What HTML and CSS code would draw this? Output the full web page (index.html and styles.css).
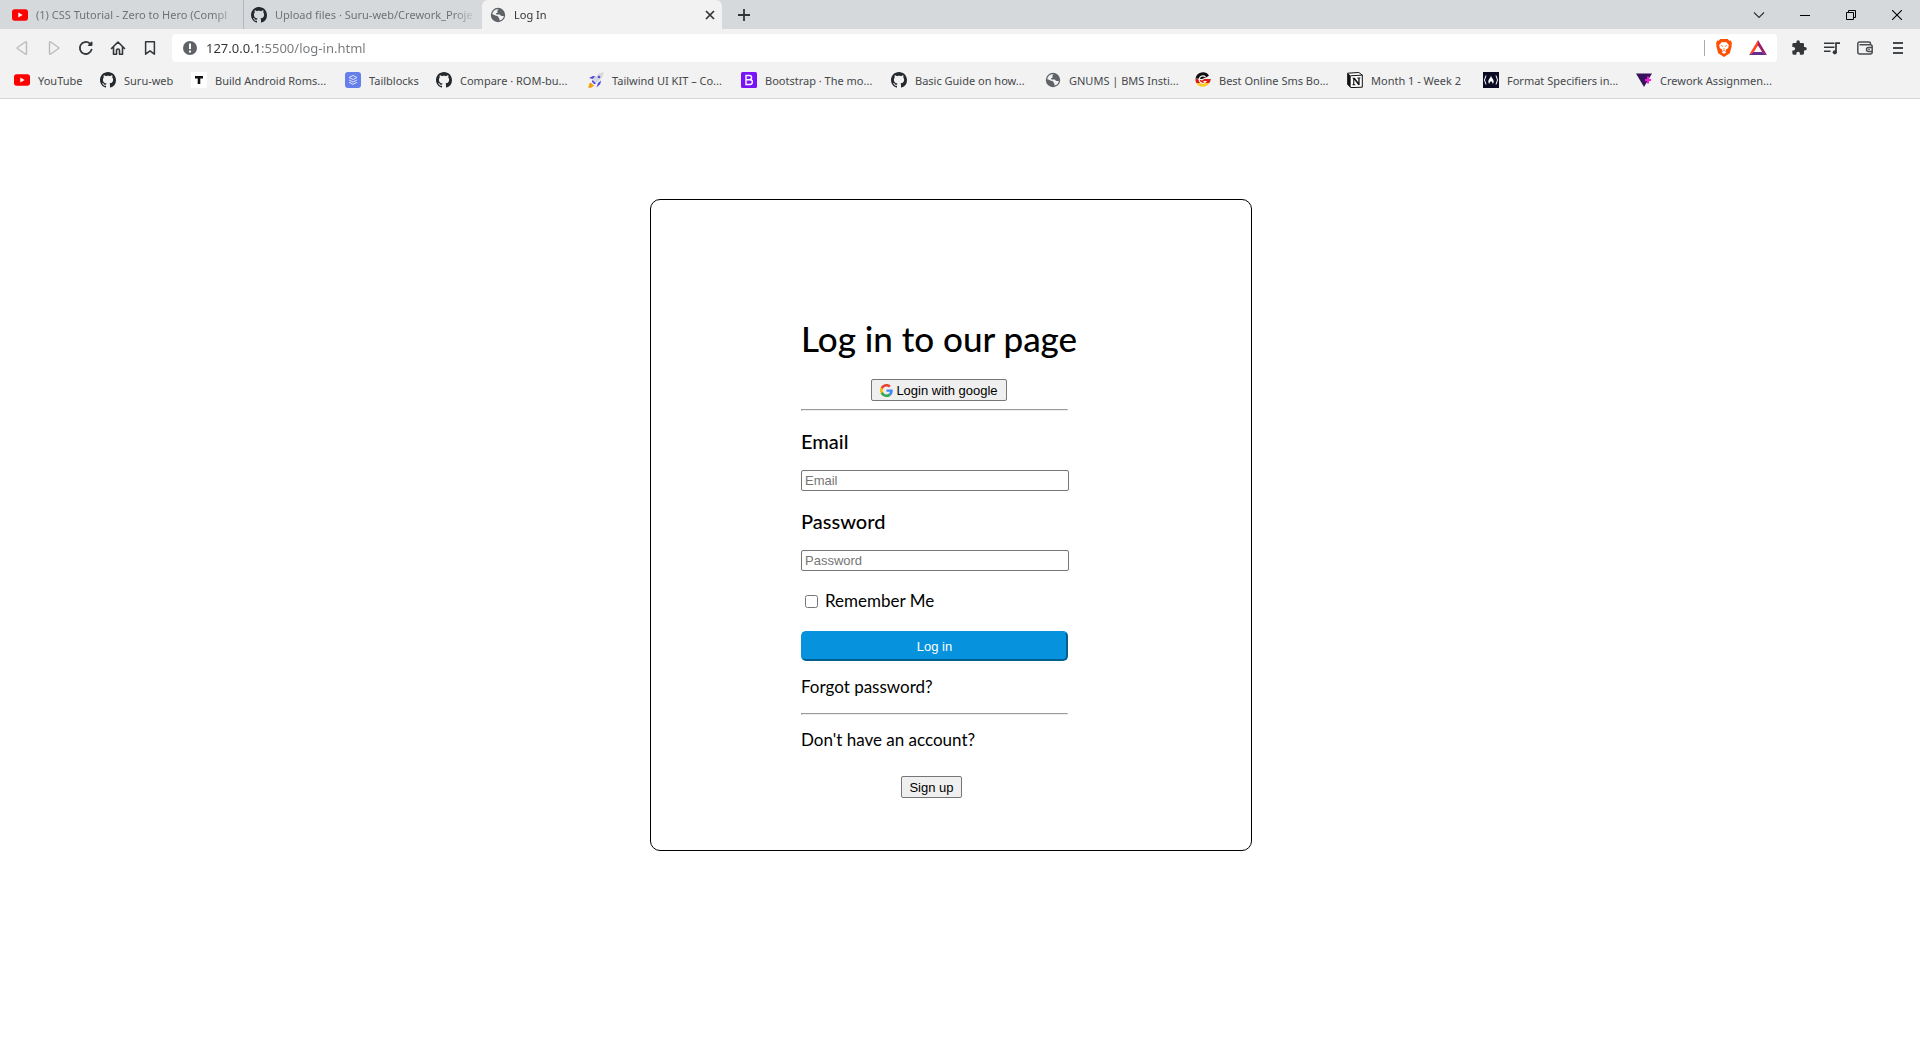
FILE: index.html
```html
<!DOCTYPE html>
<html lang="en">
<head>
<meta charset="utf-8">
<title>Log In</title>
<link rel="stylesheet" href="styles.css">
</head>
<body>
<svg class="defs" aria-hidden="true">
  <symbol id="youtube" viewBox="0 0 16 16"><rect y="2.3" width="16" height="11.4" rx="2.6" fill="#f00"/><path d="M6.3 5.6v4.8l4.3-2.4z" fill="#fff"/></symbol>
  <symbol id="github" viewBox="0 0 16 16"><path fill="#24292e" d="M8 0C3.58 0 0 3.58 0 8c0 3.54 2.29 6.53 5.47 7.59.4.07.55-.17.55-.38 0-.19-.01-.82-.01-1.49-2.01.37-2.53-.49-2.69-.94-.09-.23-.48-.94-.82-1.13-.28-.15-.68-.52-.01-.53.63-.01 1.08.58 1.23.82.72 1.21 1.87.87 2.33.66.07-.52.28-.87.51-1.07-1.78-.2-3.64-.89-3.64-3.95 0-.87.31-1.59.82-2.15-.08-.2-.36-1.02.08-2.12 0 0 .67-.21 2.2.82.64-.18 1.32-.27 2-.27s1.36.09 2 .27c1.53-1.04 2.2-.82 2.2-.82.44 1.1.16 1.92.08 2.12.51.56.82 1.27.82 2.15 0 3.07-1.87 3.75-3.65 3.95.29.25.54.73.54 1.48 0 1.07-.01 1.93-.01 2.2 0 .21.15.46.55.38A8.01 8.01 0 0 0 16 8c0-4.42-3.58-8-8-8z"/></symbol>
  <symbol id="globe" viewBox="0 0 16 16"><circle cx="8" cy="8" r="7.2" fill="#5f6368"/><path fill="#f2f2f2" d="M8.800 2.800c-1.400.2-1.700 1.200-1.300 2 .3.800-.3 1.100-1 1.300-.9.300-.5 1.300.3 1.300h2.500c1.300 0 1.200 1.500 2.300 1.500h2.300c-.3 2.300-2 4.100-4.400 4.600v-1.300c0-.9-.9-1-.9-1.800 0-1.200-1.300-1.300-2.300-1.600C4.900 8.400 3.900 7.500 2.300 7.300c.2-2.500 2-4.500 4.300-5 .7-.2 1.500-.1 2.200.5z"/></symbol>
</svg>

<header class="browser">
  <div class="tabs">
    <div class="tab">
      <svg class="icon"><use href="#youtube"/></svg>
      <span class="tab-title">(1) CSS Tutorial - Zero to Hero (Compl</span>
    </div>
    <div class="tab tab-second">
      <svg class="icon"><use href="#github"/></svg>
      <span class="tab-title">Upload files · Suru-web/Crework_Proje</span>
    </div>
    <div class="tab tab-active">
      <svg class="icon"><use href="#globe"/></svg>
      <span class="tab-title">Log In</span>
      <button class="plain tab-close" aria-label="Close tab"><svg width="10" height="10" viewBox="0 0 10 10"><path d="M1 1l8 8M9 1l-8 8" stroke="#333" stroke-width="1.7"/></svg></button>
    </div>
    <button class="plain new-tab" aria-label="New tab"><svg width="12" height="12" viewBox="0 0 12 12"><path d="M6 0v12M0 6h12" stroke="#333" stroke-width="1.8"/></svg></button>
    <div class="window-controls">
      <button class="plain" aria-label="Search tabs"><svg width="12" height="12" viewBox="0 0 12 12"><path d="M1 3.500l5 5 5-5" fill="none" stroke="#333" stroke-width="1.200"/></svg></button>
      <button class="plain" aria-label="Minimize"><svg width="10" height="10" viewBox="0 0 10 10"><path d="M0 5.500h10" stroke="#000"/></svg></button>
      <button class="plain" aria-label="Restore"><svg width="10" height="10" viewBox="0 0 10 10"><path d="M.5 2.500h7v7h-7zM2.500 2.500v-2h7v7h-2" fill="none" stroke="#000"/></svg></button>
      <button class="plain" aria-label="Close"><svg width="10" height="10" viewBox="0 0 10 10"><path d="M0 0l10 10M10 0L0 10" stroke="#000" stroke-width="1.100"/></svg></button>
    </div>
  </div>

  <div class="toolbar">
    <div class="nav">
      <button class="plain" aria-label="Back"><svg width="16" height="16" viewBox="0 0 16 16"><path d="M12.500 2.200v11.600a.5.500 0 0 1-.8.400L3.400 8.500a.6.600 0 0 1 0-1l8.300-5.700a.5.500 0 0 1 .8.400z" fill="none" stroke="#bbb" stroke-width="1.400"/></svg></button>
      <button class="plain" aria-label="Forward"><svg width="16" height="16" viewBox="0 0 16 16"><path d="M3.500 2.200v11.600a.5.500 0 0 0 .8.400l8.300-5.700a.6.600 0 0 0 0-1L4.300 1.800a.5.500 0 0 0-.8.400z" fill="none" stroke="#bbb" stroke-width="1.400"/></svg></button>
      <button class="plain" aria-label="Reload"><svg width="16" height="16" viewBox="0 0 16 16"><path d="M13.600 9.600A6 6 0 1 1 11.600 3.300" fill="none" stroke="#33373a" stroke-width="1.800" stroke-linecap="round"/><path d="M9.800 5.300a1 1 0 0 0 1 .8h2.700a1 1 0 0 0 1-1V2.400a1 1 0 0 0-1-1z" fill="#33373a"/></svg></button>
      <button class="plain" aria-label="Home"><svg width="16" height="16" viewBox="0 0 16 16"><path d="M1.500 8.500L8 2l6.500 6.500M3.500 7v7.200h3v-3.700a1.500 1.500 0 0 1 3 0v3.700h3V7" fill="none" stroke="#33373a" stroke-width="1.600" stroke-linejoin="round" stroke-linecap="round"/></svg></button>
      <button class="plain" aria-label="Bookmark"><svg width="16" height="16" viewBox="0 0 16 16"><path d="M3.600 1.800h8.800v12.400L8 10.800l-4.400 3.400z" fill="none" stroke="#33373a" stroke-width="1.500" stroke-linejoin="round"/></svg></button>
    </div>
    <div class="address">
      <svg width="16" height="16" viewBox="0 0 16 16"><circle cx="8" cy="8" r="7" fill="#5f6368"/><path d="M7 3.500h2v5.500H7zM7 10.500h2v2H7z" fill="#fff"/></svg>
      <input class="url" type="text" aria-label="Address" value="127.0.0.1:5500/log-in.html">
      <span class="divider"></span>
      <button class="plain" aria-label="Shields"><svg width="18" height="18" viewBox="0 0 18 18"><path d="M5.300 0h7.400l1.600 1.700 1.500-.1 1.200 2.800-.5 1.400.3 1-2 7.400L9 18l-5.800-3.800-2-7.400.3-1L1 4.400l1.200-2.800 1.500.1z" fill="#ff5000"/><path d="M9 3.300l2.200-.3 2.800 3.200-.8 1.800.2 1-2.500 1.400.2 1L9 13.200l-2.100-1.800.2-1L4.600 9l.2-1L4 6.200 6.800 3zM6.600 13.200L9 11.800l2.400 1.400L9 15z" fill="#fff"/><path d="M5.600 6l2.200.8-.3 1.100zM12.400 6l-2.200.8.300 1.100zM9 8.500l.7 1.900H8.300zM7.500 11l1.500 1 1.500-1" fill="#ff5000"/></svg></button>
      <button class="plain" aria-label="Rewards"><svg width="18" height="18" viewBox="0 0 18 18"><path d="M9 1v5.500L4.700 13.300 0 16z" fill="#ff4724"/><path d="M9 1l9 15-4.700-2.700L9 6.500z" fill="#9e1f63"/><path d="M0 16l4.700-2.900h8.600L18 16z" fill="#662d91"/></svg></button>
    </div>
    <div class="actions">
      <button class="plain" aria-label="Extensions"><svg width="16" height="16" viewBox="0 0 24 24"><path fill="#33373a" d="M21 10.500h-1.500V6.500a2 2 0 0 0-2-2h-4.200V3a2.600 2.600 0 0 0-5.200 0v1.500H4a2 2 0 0 0-2 2v4h1.500a2.700 2.700 0 0 1 0 5.400H2V20a2 2 0 0 0 2 2h4v-1.500a2.700 2.700 0 0 1 5.400 0V22h4.100a2 2 0 0 0 2-2v-4.200H21a2.650 2.650 0 0 0 0-5.300z"/></svg></button>
      <button class="plain" aria-label="Media control"><svg width="16" height="16" viewBox="0 0 16 16"><path d="M0 3.200h10.500M0 7.200h10.500M0 11.200h6.500" stroke="#33373a" stroke-width="1.600"/><path d="M12 13V3.200h4" fill="none" stroke="#33373a" stroke-width="1.700"/><circle cx="10.800" cy="12.300" r="2.100" fill="#33373a"/></svg></button>
      <button class="plain" aria-label="Wallet"><svg width="16" height="16" viewBox="0 0 16 16"><path d="M13.500 5V3.500a1.500 1.500 0 0 0-1.500-1.500H2.500a1.700 1.700 0 0 0-1.700 1.700V12a2 2 0 0 0 2 2h10.400a2 2 0 0 0 2-2V6.800a2 2 0 0 0-2-2H2.500M15 7.400h-3.500a2 2 0 0 0 0 4H15" fill="none" stroke="#4a4e51" stroke-width="1.500"/><circle cx="12" cy="9.400" r=".8" fill="#4a4e51"/></svg></button>
      <button class="plain" aria-label="Menu"><svg width="16" height="16" viewBox="0 0 16 16"><path d="M3 3h10M3 8h10M3 13h10" stroke="#45494c" stroke-width="1.800"/></svg></button>
    </div>
  </div>

  <nav class="bookmarks" aria-label="Bookmarks">
    <a href="#"><svg class="icon"><use href="#youtube"/></svg>YouTube</a>
    <a href="#"><svg class="icon"><use href="#github"/></svg>Suru-web</a>
    <a href="#"><svg class="icon" viewBox="0 0 16 16"><rect width="16" height="16" fill="#fff"/><path d="M4 4h8v2.500H9.300V12H6.700V6.500H4z" fill="#111"/></svg>Build Android Roms...</a>
    <a href="#"><svg class="icon" viewBox="0 0 16 16"><rect width="16" height="16" rx="3" fill="#667eea"/><path d="M8 3.500l4 2-4 2-4-2zM4 8l4 2 4-2M4 10.300l4 2 4-2" fill="none" stroke="#dfe4ff" stroke-width="1"/></svg>Tailblocks</a>
    <a href="#"><svg class="icon"><use href="#github"/></svg>Compare · ROM-bu...</a>
    <a href="#"><svg class="icon" viewBox="0 0 16 16"><path d="M1 6l4-2 2.500.5L4.500 7zM10 11l3-2.500-.7 3.500-3.800 3.500z" fill="#4f46e5"/><path d="M16 0l-5 1.500L4.500 8l3.500 3.500L14 5.500z" fill="#d4d7dc"/><path d="M4.500 8L8 11.500l-1.800.8-2.300-2.500z" fill="#4f46e5"/><circle cx="11" cy="5" r="1.300" fill="#5b54d8"/><path d="M2.500 10.500C1 11.500.3 14 .5 16c2 0 4.500-.8 5.400-2.500z" fill="#f59e0b"/></svg>Tailwind UI KIT – Co...</a>
    <a href="#"><svg class="icon" viewBox="0 0 16 16"><rect width="16" height="16" rx="1.500" fill="#7a12fa"/><path d="M5 3.500h3.500a2.100 2.100 0 0 1 0 4.200H5zM5 7.700h4a2.400 2.400 0 0 1 0 4.800H5z" fill="none" stroke="#fff" stroke-width="1.400"/></svg>Bootstrap · The mo...</a>
    <a href="#"><svg class="icon"><use href="#github"/></svg>Basic Guide on how...</a>
    <a href="#"><svg class="icon"><use href="#globe"/></svg>GNUMS | BMS Insti...</a>
    <a href="#"><svg class="icon" viewBox="0 0 16 16"><path d="M14 3.500A7.500 7.500 0 0 0 .5 6.500L7 7l5-2z" fill="#111"/><path d="M.5 6.500A7.500 7.500 0 0 0 1.300 11h13A7 7 0 0 0 15.800 7H9.500L7 8.500z" fill="#dd1c10"/><path d="M1.300 11a7.500 7.500 0 0 0 13 0z" fill="#ffc928"/><path d="M10.500 5A3.700 3.700 0 1 0 11 9.500H8.500" fill="none" stroke="#fff" stroke-width="1.100"/></svg>Best Online Sms Bo...</a>
    <a href="#"><svg class="icon" viewBox="0 0 16 16"><path d="M.7 1.200L11.800.5l3.500 2.600v12.100l-11.600.4-3-3.300z" fill="#fff" stroke="#111"/><path d="M.7 1.200l3 2.600v11.800l-3-3.300z" fill="#111"/><path d="M3.700 3.800l11.600-.7" stroke="#111"/><path d="M5.500 5.700h2.300l3.500 4.900V6.500h-1v-.9h3v.9h-.7v6.600h-1.400L7.300 7.700v4.600h1v.9H5.500v-.9h.7V6.600h-.7z" fill="#111"/></svg>Month 1 - Week 2</a>
    <a href="#"><svg class="icon" viewBox="0 0 16 16"><rect width="16" height="16" fill="#0a0a23"/><path d="M3 3.500q-3 4.500 0 9M13 3.500q3 4.500 0 9" fill="none" stroke="#fff" stroke-width="1"/><path d="M8 3.500c.3 2.500 2.700 3.500 2.700 6 0 1-.5 1.900-1.200 2.500.4-1.400-.6-2-1.500-3-.7 1-1.900 1.600-1.500 3-.8-.6-1.200-1.500-1.200-2.500 0-2.300 2.500-3.500 2.700-6z" fill="#fff"/></svg>Format Specifiers in...</a>
    <a href="#"><svg class="icon" viewBox="0 0 16 16"><path d="M0 1.500h16L8 15z" fill="#36125c"/><path d="M12 4.500v7M9 8h6" stroke="#f418d8" stroke-width="2"/></svg>Crework Assignmen...</a>
  </nav>
</header>

<main>
  <form class="card">
    <h1>Log in to our page</h1>
    <button class="small google" type="button"><svg width="13" height="13" viewBox="0 0 48 48"><path fill="#ea4335" d="M24 9.500c3.540 0 6.710 1.220 9.210 3.600l6.850-6.850C35.900 2.380 30.470 0 24 0 14.620 0 6.510 5.380 2.560 13.220l7.980 6.190C12.430 13.720 17.740 9.500 24 9.500z"/><path fill="#4285f4" d="M46.980 24.550c0-1.570-.15-3.090-.38-4.550H24v9.020h12.940c-.58 2.960-2.260 5.480-4.780 7.180l7.730 6c4.510-4.180 7.090-10.360 7.090-17.650z"/><path fill="#fbbc05" d="M10.530 28.590a14.500 14.500 0 0 1 0-9.180l-7.980-6.190a24 24 0 0 0 0 21.560z"/><path fill="#34a853" d="M24 48c6.480 0 11.930-2.130 15.890-5.810l-7.730-6c-2.150 1.450-4.920 2.300-8.160 2.300-6.260 0-11.570-4.220-13.470-9.910l-7.980 6.190C6.510 42.620 14.620 48 24 48z"/></svg>Login with google</button>
    <hr>
    <label class="field-label" for="email">Email</label>
    <input class="field" id="email" type="email" placeholder="Email">
    <label class="field-label" for="password">Password</label>
    <input class="field" id="password" type="password" placeholder="Password">
    <div class="remember"><input type="checkbox" id="remember"><label for="remember">Remember Me</label></div>
    <button class="login" type="submit">Log in</button>
    <a class="forgot" href="#">Forgot password?</a>
    <hr>
    <p>Don't have an account?</p>
    <button class="small signup" type="button">Sign up</button>
  </form>
</main>
</body>
</html>
```
FILE: styles.css
```css
* { box-sizing: border-box; }

body {
  margin: 0;
  background: #fff;
  color: #000;
  font-family: Lato, "Open Sans", sans-serif;
}

svg { display: block; flex: none; }
.defs { display: none; }
.icon { width: 16px; height: 16px; }
a { color: inherit; text-decoration: none; }

.plain {
  display: flex;
  align-items: center;
  justify-content: center;
  padding: 0;
  border: 0;
  background: none;
}

/* Browser frame */
.browser {
  font-family: "Noto Sans", "Open Sans", sans-serif;
  font-size: 11px;
  background: #f2f2f2;
  border-bottom: 1px solid #d4d6d8;
}

.tabs {
  display: flex;
  height: 29px;
  background: #d5d9dc;
}

.tab {
  display: flex;
  align-items: center;
  gap: 8px;
  width: 243px;
  padding: 0 5px 0 12px;
  color: #6f7275;
}

.tab-second {
  width: 239px;
  padding-left: 8px;
  box-shadow: inset 1px 0 #b3b7ba;
}

.tab-active {
  width: 240px;
  padding: 0 7px 0 8px;
  border-radius: 6px 6px 0 0;
  background: #f2f2f2;
  color: #333;
}

.tab-title {
  flex: 1;
  white-space: nowrap;
  mask-image: linear-gradient(90deg, #000 calc(100% - 24px), transparent);
}

.tab-close { width: 10px; }
.new-tab { width: 44px; }

.window-controls {
  display: flex;
  margin-left: auto;
}
.window-controls .plain { width: 46px; }

.toolbar {
  display: flex;
  align-items: center;
  padding: 5px 6px 4px;
}

.nav, .actions { display: flex; }
.nav .plain { width: 32px; height: 28px; }
.nav { margin-right: 6px; }
.actions { margin-left: 5px; }
.actions .plain { width: 33px; height: 28px; }

.address {
  display: flex;
  flex: 1;
  align-items: center;
  height: 28px;
  padding: 0 10px;
  border-radius: 4px;
  background: #fff;
}

.url {
  flex: 1;
  margin-left: 8px;
  padding: 0;
  border: 0;
  outline: 0;
  font: 13px "Noto Sans", "Open Sans", sans-serif;
  color: transparent;
  background: linear-gradient(90deg, #333 53px, #75787b 53px);
  background-clip: text;
}

.divider { width: 1px; height: 16px; margin-right: 10px; background: #a9abad; }
.address .plain + .plain { margin-left: 16px; }

.bookmarks {
  display: grid;
  grid-template-columns: 86px 91px 154px 91px 152px 153px 150px 154px 150px 152px 136px 153px auto;
  height: 32px;
  padding: 0 14px;
  overflow: hidden;
  color: #45484b;
}

.bookmarks a {
  display: flex;
  align-items: center;
  gap: 8px;
  padding-bottom: 4px;
  white-space: nowrap;
}

/* Log-in card */
main {
  display: flex;
  justify-content: center;
  padding: 100px 18px 40px 0;
}

.card {
  display: flex;
  flex-direction: column;
  width: 602px;
  padding: 119px 182px 52px 150px;
  border: 1px solid #000;
  border-radius: 10px;
  font-size: 17px;
  line-height: 20px;
}

.card h1 {
  margin: 0 0 22px;
  font-size: 35px;
  font-weight: 500;
  line-height: 38px;
  white-space: nowrap;
}

.card p { margin: 0; }

.card hr {
  width: 267px;
  height: 2px;
  margin: 0;
  border: 1px solid;
  border-color: #9a9a9a #eee #eee #9a9a9a;
}

.small {
  display: flex;
  align-items: center;
  justify-content: center;
  gap: 3px;
  height: 22px;
  padding: 0;
  border: 1px solid #767676;
  border-radius: 2px;
  background: #efefef;
  color: #000;
  font: 13px "Liberation Sans", Arial, sans-serif;
}

.google { width: 136px; margin: 0 0 8px 70px; }
.signup { width: 61px; margin: 26px 0 0 100px; }

.field-label {
  margin: 19px 0 18px;
  font-size: 20px;
  font-weight: 500;
  line-height: 22px;
}

.field {
  width: 268px;
  height: 21px;
  padding: 1px 3px;
  border: 1px solid #767676;
  border-radius: 2px;
  font: 13px "Liberation Sans", Arial, sans-serif;
}
.field::placeholder { color: #757575; }

.remember {
  display: flex;
  align-items: center;
  gap: 7px;
  margin: 20px 0;
}
.remember input { width: 13px; height: 13px; margin: 0 0 0 4px; }

.login {
  width: 267px;
  height: 30px;
  padding: 0;
  border: 2px solid;
  border-color: #0692dc #045f90 #045f90 #0692dc;
  border-radius: 5px;
  background: #0692dc;
  color: #fff;
  font: 13px "Liberation Sans", Arial, sans-serif;
}

.forgot { margin: 16px 0; }
hr + p { padding-top: 15px; }
```
